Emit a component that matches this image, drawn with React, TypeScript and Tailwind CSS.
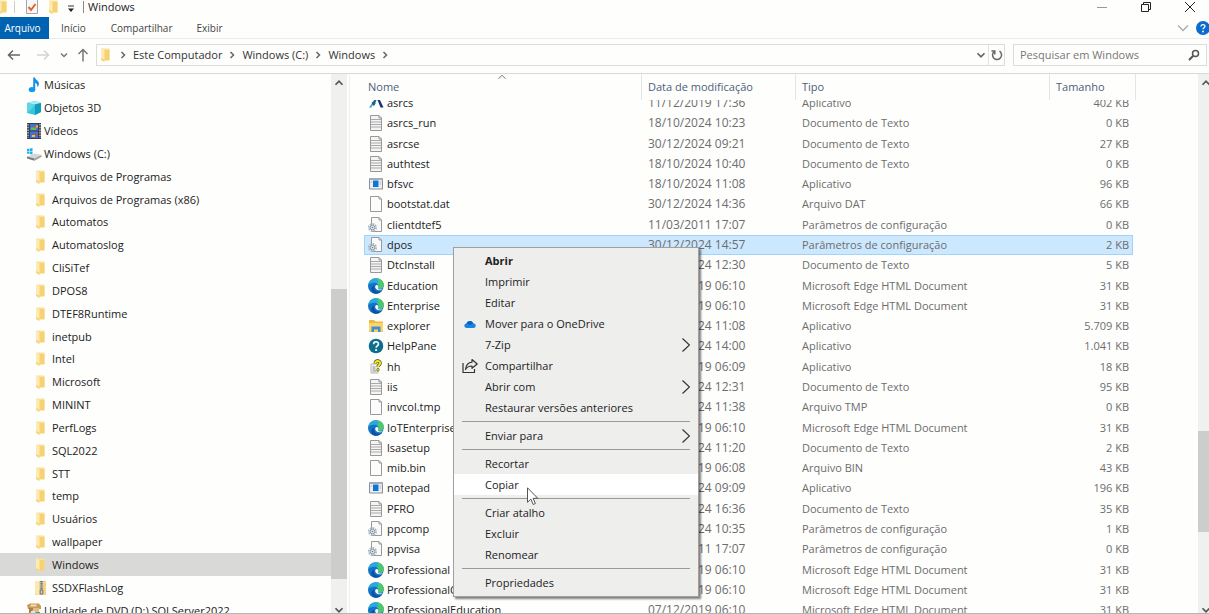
import type { ReactNode } from "react";
import clsx from "clsx";

type IconName =
  | "folder" | "music" | "cube" | "video" | "drive" | "zip" | "dvd"
  | "asrcs" | "text" | "app" | "blank" | "config" | "edge" | "explorer" | "help" | "chm";

const icons: Record<IconName, ReactNode> = {
  folder: (
    <>
      <path d="M4 1.5h8.5v11.5H4z" fill="#fbe29a" />
      <path d="M7 3h5.500v10.500H7z" fill="#f6d273" />
      <path d="M4 1.500 7.500 3.500V15L4 13z" fill="#fdeab4" />
      <path d="M4 13 7.500 15V12.500L4 11z" fill="#f7d57c" />
    </>
  ),
  music: (
    <>
      <path d="M7.200.5H9c.3 2.300 4 3 4 6.200 0 1.500-.8 2.700-1.800 3.300.5-2.300-.5-3.500-2-4.200V12.500H7.200z" fill="#1b8fe6" />
      <ellipse cx="6" cy="12.500" rx="3.300" ry="2.600" fill="#0f9bf2" />
    </>
  ),
  cube: (
    <>
      <path d="M1 3 9 1l6 2v9l-6 3-8-2z" fill="#37c5de" />
      <path d="M1 3l8 1.500L15 3 9 1z" fill="#a4ebf3" />
      <path d="M9 4.500 15 3v9l-6 3z" fill="#0f9cbd" />
      <path d="M1 3l8 1.500-4 5L1 13z" fill="#5fd6e8" />
    </>
  ),
  video: (
    <>
      <path d="M1 0h14v16H1z" fill="#3b3f4c" />
      <path d="M4 1h8v6.500H4zM4 8.500h8V15H4z" fill="#3f73d8" />
      <path d="M2 1v14M14 1v14" stroke="#d9dce2" strokeWidth="1.200" strokeDasharray="1.500 1.200" />
      <path d="M8 3h2v2H8z" fill="#e6463c" />
      <path d="M5 4.500h5V7H5z" fill="#69b946" />
      <path d="M10 2.500h2v2h-2zM6 12h3v2H6z" fill="#f1c232" />
      <path d="M9 10h2v3H9z" fill="#d8443c" />
    </>
  ),
  drive: (
    <>
      <path d="M1 3l2.500-.4V5H1zM4 2.500l2.500-.4V5H4zM1 5.500h2.500V8L1 7.600zM4 5.500h2.500v3L4 8.100z" fill="#1fb0e8" />
      <path d="M1 10.500 9 7.500l6.500 1.500-7 3.500z" fill="#d4d6d8" />
      <path d="M1 10.500l7.500 2v2.300L1 12.500z" fill="#77797c" />
      <path d="M8.500 12.500l7-3.500v1.800l-7 4z" fill="#9b9da0" />
    </>
  ),
  zip: (
    <>
      <path d="M3 1h11v14H3z" fill="#f7d678" />
      <path d="M3 1h4v14l-4-1z" fill="#fce9b0" />
      <path d="M7.500 1h4v14h-4z" fill="#d6cfb9" />
      <path d="M9.500 1v9" stroke="#5c5b57" strokeWidth="2.200" strokeDasharray="1.200 1" />
      <path d="M8.200 10h2.600v4H8.200z" fill="none" stroke="#77736a" />
    </>
  ),
  dvd: (
    <>
      <path d="M1 2l3-1.500h9L15 3v3H2z" fill="#c9995a" />
      <path d="M3 5h10v11H3z" fill="#e2bb7f" />
      <path d="M3 5h4v11H3z" fill="#ab7c43" />
      <path d="M5 1.500h6l-1 2H4z" fill="#f3ddb2" />
      <path d="M9 9h5v6H9z" fill="#4aa564" />
      <circle cx="7" cy="10" r="2.500" fill="#dfe4e8" />
    </>
  ),
  asrcs: (
    <>
      <path d="M1 12.500 4.500 8H8L6 10.500H4L3.500 12.500z" fill="#2ba0b8" />
      <path d="M3.500 8 6.500 5H8.500L6 11z" fill="#1c5f90" />
      <path d="M9.500 5h2.500L15.500 12.500h-3z" fill="#17356e" />
    </>
  ),
  text: (
    <>
      <path d="M2.500.5h8.500l2.500 2.500v12.500h-11z" fill="#f4f4f4" stroke="#999" />
      <path d="M3 4.500h10M3 7h10M3 9.500h10M3 12h10" stroke="#aaa" strokeWidth="1.200" />
      <path d="M11 .5V3h2.500" fill="none" stroke="#999" />
    </>
  ),
  app: (
    <>
      <path d="M1.500 2.500h13v10.500h-13z" fill="#eceff2" stroke="#8a8f94" />
      <path d="M1 2h14v2H1z" fill="#a7acb2" />
      <path d="M5 4.500h5.500v6.500H5z" fill="#0a78d7" />
      <path d="M11.500 6h2M11.500 8h2M2.500 6h1.500" stroke="#b3b8bc" />
    </>
  ),
  blank: (
    <>
      <path d="M2.500.5h8.500l2.500 2.500v12.500h-11z" fill="#fcfcfc" stroke="#999" />
      <path d="M11 .5V3h2.500" fill="none" stroke="#999" />
    </>
  ),
  config: (
    <>
      <path d="M3.500.5h7.500l2.500 2.500v11.500h-10z" fill="#fafafa" stroke="#999" />
      <path d="M11 .5V3h2.500" fill="none" stroke="#999" />
      <circle cx="4.500" cy="10.500" r="3.400" fill="none" stroke="#a9b7c1" strokeWidth="2.200" strokeDasharray="1.700 .9" />
      <circle cx="4.500" cy="10.500" r="2.300" fill="#dfe6ea" stroke="#8fa1ad" />
      <circle cx="4.500" cy="10.500" r=".8" fill="#6f828e" />
    </>
  ),
  edge: (
    <>
      <circle cx="7.800" cy="8" r="7.800" fill="#1273c8" />
      <path d="M.3 7C1 3 4 .2 8 .2c4.500 0 7.800 3 7.800 6.700 0 2.600-1.900 4-4.200 4-1.500 0-2.100-.7-1.400-1.600C11 7.500 9.500 4.800 6.500 4.800 3.500 4.800 1.300 5.800.3 7z" fill="#2aa9dc" />
      <path d="M8.500.3c4.300.3 7.300 3.200 7.300 6.600 0 2.600-1.900 4-4.200 4-1.500 0-2.100-.7-1.400-1.600.8-1.300.5-3-1-4C11 5 10.500 2 8.500.3z" fill="#4fc76a" />
      <path d="M6.200 7.800c-1 3.500 1.600 6.300 4.800 5.900 1.400-.2 2.600-.9 3.500-1.900-1.300 2.500-3.700 4-6.500 4-3 0-5-2.800-4.500-5.100.3-1.300 1.200-2.400 2.700-2.900z" fill="#0e4f9f" />
      <path d="M10.200 9.300c.4-1.200-.3-2.200-1.400-2.200S7 8.200 7.200 9.300c.4 1.800 2.200 2.900 4.400 2.900 1.500 0 2.700-.5 3.400-1.300-1 .5-2 .7-3.400.6-1.600-.1-2.300-1-1.400-2.200z" fill="#fff" />
    </>
  ),
  explorer: (
    <>
      <path d="M1 2h5l1.500 1.500H15V14H1z" fill="#f0b93a" />
      <path d="M1 5h14v8.500H1z" fill="#fcd668" />
      <path d="M3.500 14V8.500h9V14H10v-2.500H6V14z" fill="#3f8fd4" />
    </>
  ),
  help: (
    <>
      <circle cx="8" cy="8" r="7.300" fill="#0c6d8c" />
      <path d="M5.600 6.200C5.600 3 10.500 3 10.500 6c0 1.800-2.400 1.900-2.400 3.700" fill="none" stroke="#fff" strokeWidth="1.700" />
      <circle cx="8.100" cy="12" r="1.100" fill="#fff" />
    </>
  ),
  chm: (
    <>
      <path d="M3 5h7v9H3z" fill="#f3f3f0" stroke="#b5b5b0" />
      <path d="M4.500 8h3M4.500 10h3M4.500 12h4" stroke="#8a8a86" />
      <path d="M7.200 4.500C7.200 1.200 12.200 1.200 12.200 4c0 2-2.200 2-2.200 4" fill="none" stroke="#45451a" strokeWidth="3.200" />
      <path d="M7.200 4.500C7.200 1.200 12.200 1.200 12.200 4c0 2-2.200 2-2.200 4" fill="none" stroke="#f3e51e" strokeWidth="2" />
      <circle cx="10" cy="10.700" r="1.300" fill="#f3e51e" stroke="#45451a" strokeWidth=".6" />
    </>
  ),
};

function Icon({ name, className = "size-4" }: { name: IconName; className?: string }) {
  return (
    <svg viewBox="0 0 16 16" className={clsx("shrink-0", className)} aria-hidden="true">
      {icons[name]}
    </svg>
  );
}

const chevrons = {
  up: "M4 10l4-4 4 4",
  down: "M4 6l4 4 4-4",
  right: "M6 4l4 4-4 4",
};

function Chevron({ dir, className = "size-3", width = 2 }: { dir: keyof typeof chevrons; className?: string; width?: number }) {
  return (
    <svg viewBox="0 0 16 16" className={clsx("shrink-0", className)} fill="none" stroke="currentColor" strokeWidth={width} aria-hidden="true">
      <path d={chevrons[dir]} />
    </svg>
  );
}

const tree: { name: string; icon: IconName; nested?: boolean }[] = [
  { name: "Músicas", icon: "music" },
  { name: "Objetos 3D", icon: "cube" },
  { name: "Vídeos", icon: "video" },
  { name: "Windows (C:)", icon: "drive" },
  { name: "Arquivos de Programas", icon: "folder", nested: true },
  { name: "Arquivos de Programas (x86)", icon: "folder", nested: true },
  { name: "Automatos", icon: "folder", nested: true },
  { name: "Automatoslog", icon: "folder", nested: true },
  { name: "CliSiTef", icon: "folder", nested: true },
  { name: "DPOS8", icon: "folder", nested: true },
  { name: "DTEF8Runtime", icon: "folder", nested: true },
  { name: "inetpub", icon: "folder", nested: true },
  { name: "Intel", icon: "folder", nested: true },
  { name: "Microsoft", icon: "folder", nested: true },
  { name: "MININT", icon: "folder", nested: true },
  { name: "PerfLogs", icon: "folder", nested: true },
  { name: "SQL2022", icon: "folder", nested: true },
  { name: "STT", icon: "folder", nested: true },
  { name: "temp", icon: "folder", nested: true },
  { name: "Usuários", icon: "folder", nested: true },
  { name: "wallpaper", icon: "folder", nested: true },
  { name: "Windows", icon: "folder", nested: true },
  { name: "SSDXFlashLog", icon: "zip", nested: true },
  { name: "Unidade de DVD (D:) SQLServer2022", icon: "dvd" },
];

const TXT = "Documento de Texto";
const APP = "Aplicativo";
const INI = "Parâmetros de configuração";
const HTML = "Microsoft Edge HTML Document";

const files: [IconName, string, string, string, string][] = [
  ["asrcs", "asrcs", "11/12/2019 17:36", APP, "402 KB"],
  ["text", "asrcs_run", "18/10/2024 10:23", TXT, "0 KB"],
  ["text", "asrcse", "30/12/2024 09:21", TXT, "27 KB"],
  ["text", "authtest", "18/10/2024 10:40", TXT, "0 KB"],
  ["app", "bfsvc", "18/10/2024 11:08", APP, "96 KB"],
  ["blank", "bootstat.dat", "30/12/2024 14:36", "Arquivo DAT", "66 KB"],
  ["config", "clientdtef5", "11/03/2011 17:07", INI, "0 KB"],
  ["config", "dpos", "30/12/2024 14:57", INI, "2 KB"],
  ["text", "DtcInstall", "18/10/2024 12:30", TXT, "5 KB"],
  ["edge", "Education", "07/12/2019 06:10", HTML, "31 KB"],
  ["edge", "Enterprise", "07/12/2019 06:10", HTML, "31 KB"],
  ["explorer", "explorer", "18/10/2024 11:08", APP, "5.709 KB"],
  ["help", "HelpPane", "18/10/2024 14:00", APP, "1.041 KB"],
  ["chm", "hh", "07/12/2019 06:09", APP, "18 KB"],
  ["text", "iis", "18/10/2024 12:31", TXT, "95 KB"],
  ["blank", "invcol.tmp", "18/10/2024 11:38", "Arquivo TMP", "0 KB"],
  ["edge", "IoTEnterprise", "07/12/2019 06:10", HTML, "31 KB"],
  ["text", "lsasetup", "18/10/2024 11:20", TXT, "2 KB"],
  ["blank", "mib.bin", "07/12/2019 06:08", "Arquivo BIN", "43 KB"],
  ["app", "notepad", "18/10/2024 09:09", APP, "196 KB"],
  ["text", "PFRO", "30/12/2024 16:36", TXT, "35 KB"],
  ["config", "ppcomp", "18/10/2024 10:35", INI, "1 KB"],
  ["config", "ppvisa", "11/03/2011 17:07", INI, "0 KB"],
  ["edge", "Professional", "07/12/2019 06:10", HTML, "31 KB"],
  ["edge", "ProfessionalCountrySpecific", "07/12/2019 06:10", HTML, "31 KB"],
  ["edge", "ProfessionalEducation", "07/12/2019 06:10", HTML, "31 KB"],
];

type MenuItem = { label: string; icon?: ReactNode; submenu?: boolean };

const menu: MenuItem[][] = [
  [
    { label: "Abrir" },
    { label: "Imprimir" },
    { label: "Editar" },
    {
      label: "Mover para o OneDrive",
      icon: (
        <svg viewBox="0 0 16 16" className="size-3.5">
          <path d="M4.500 12.500C.5 12.500.8 8 4 7.500 5 3.500 10.500 3.500 11.500 7c4 .2 4 5.500.5 5.500z" fill="#1486de" />
          <path d="M4 7.500C5 3.500 10.500 3.500 11.500 7L8 9.500z" fill="#0b63ba" />
        </svg>
      ),
    },
    { label: "7-Zip", submenu: true },
    {
      label: "Compartilhar",
      icon: (
        <svg viewBox="0 0 16 16" className="size-4" fill="none" stroke="#333" strokeWidth="1.200" strokeLinejoin="round">
          <path d="M1 5v9.500h11.500V11" />
          <path d="M10 1.500 15.200 6 10 10.300V8C7 8 5 9 3.500 11.500 4 7.500 6.200 4.500 10 4.200z" />
        </svg>
      ),
    },
    { label: "Abrir com", submenu: true },
    { label: "Restaurar versões anteriores" },
  ],
  [{ label: "Enviar para", submenu: true }],
  [{ label: "Recortar" }, { label: "Copiar" }],
  [{ label: "Criar atalho" }, { label: "Excluir" }, { label: "Renomear" }],
  [{ label: "Propriedades" }],
];

function TitleBar() {
  return (
    <header className="flex h-[17px] items-start justify-between overflow-hidden">
      <div className="flex h-[14px] items-center">
        <Icon name="folder" className="-ml-1.5 size-4" />
        <span className="ml-1 h-3 w-px bg-[#ccc]" />
        <button aria-label="Propriedades" className="ml-2.5">
          <svg viewBox="0 0 14 16" className="h-4 w-3.5" fill="none">
            <path d="M1.500.5h11v14h-11z" fill="#f7f7f7" stroke="#a6a6a6" />
            <path d="M3.500 8l2.500 3 4.500-6" stroke="#e2622a" strokeWidth="2" />
          </svg>
        </button>
        <button aria-label="Nova pasta" className="ml-1.5">
          <Icon name="folder" />
        </button>
        <button aria-label="Personalizar" className="ml-1.5">
          <svg viewBox="0 0 8 8" className="mt-1 size-2">
            <path d="M1 1h6" stroke="#333" />
            <path d="M1 3.500h6L4 7z" fill="#222" />
          </svg>
        </button>
        <span className="ml-2 h-3 w-px bg-[#888]" />
        <h1 className="ml-1 text-[11px] leading-[14px] text-[#222]">Windows</h1>
      </div>
      <div className="flex h-[13px] items-center gap-[34px] pr-3.5 text-[#222]">
        <button aria-label="Minimizar">
          <svg viewBox="0 0 10 10" className="size-2.5" stroke="#999"><path d="M0 5.500h10" /></svg>
        </button>
        <button aria-label="Restaurar">
          <svg viewBox="0 0 10 10" className="size-2.5" fill="none" stroke="currentColor">
            <path d="M.5 2.500h7v7h-7zM2.500 2.500v-2h7v7h-2" />
          </svg>
        </button>
        <button aria-label="Fechar">
          <svg viewBox="0 0 10 10" className="size-2.5" stroke="currentColor"><path d="M0 0l10 10M10 0L0 10" /></svg>
        </button>
      </div>
    </header>
  );
}

function Ribbon() {
  return (
    <nav className="flex h-[22px] items-center border-b border-[#ececec] text-[10px] text-[#444]">
      <button className="h-[22px] w-[49px] bg-[#0063b1] pr-1 text-white">Arquivo</button>
      <button className="ml-3">Início</button>
      <button className="ml-[25px]">Compartilhar</button>
      <button className="ml-6">Exibir</button>
      <button aria-label="Expandir" className="ml-auto text-[#aaa]">
        <Chevron dir="down" className="size-5" width={1} />
      </button>
      <button aria-label="Ajuda" className="-mr-0.5 ml-0.5">
        <svg viewBox="0 0 16 16" className="size-4">
          <circle cx="8" cy="8" r="7" fill="#0a6cce" />
          <path d="M6 6.500C6 4 10 4 10 6.300c0 1.400-2 1.500-2 3" fill="none" stroke="#fff" strokeWidth="1.300" />
          <circle cx="8" cy="11.500" r=".9" fill="#fff" />
        </svg>
      </button>
    </nav>
  );
}

function AddressBar() {
  return (
    <div className="flex h-[35px] items-center border-b border-[#d9d9d9] pb-0.5 text-[#333]">
      <div className="flex w-24 items-center pl-[7px] text-[#777]">
        <button aria-label="Voltar">
          <svg viewBox="0 0 14 14" className="size-3.5" fill="none" stroke="#666" strokeWidth="1.500"><path d="M13 7H1.500M6 2.500 1.500 7 6 11.500" /></svg>
        </button>
        <button aria-label="Avançar" className="ml-[15px]">
          <svg viewBox="0 0 14 14" className="size-3.5" fill="none" stroke="#d4d4d4" strokeWidth="1.500"><path d="M1 7h11.500M8 2.500 12.500 7 8 11.500" /></svg>
        </button>
        <button aria-label="Recentes" className="ml-2">
          <Chevron dir="down" />
        </button>
        <button aria-label="Acima" className="ml-1.5">
          <svg viewBox="0 0 14 14" className="size-3.5" fill="none" stroke="#777" strokeWidth="1.500"><path d="M7 13.500V1.500M2.500 6 7 1.500 11.500 6" /></svg>
        </button>
      </div>
      <div className="flex h-[22px] flex-1 items-center border border-[#dcdcdc]">
        <Icon name="folder" />
        <div className="flex items-center gap-1 pl-1 text-[#333]">
          {["Este Computador", "Windows (C:)", "Windows"].map((part) => (
            <span key={part} className="flex items-center gap-1">
              <Chevron dir="right" className="size-3 text-[#666]" />
              <a href="#">{part}</a>
            </span>
          ))}
          <Chevron dir="right" className="size-3 text-[#666]" />
        </div>
        <button aria-label="Locais anteriores" className="ml-auto text-[#666]">
          <Chevron dir="down" className="size-3.5" />
        </button>
        <button aria-label="Atualizar" className="flex h-full w-4 items-center justify-center border-l border-[#e4e4e4]">
          <svg viewBox="0 0 12 12" className="size-3" fill="none" stroke="#666" strokeWidth="1.500">
            <path d="M8.500 2.200A4.500 4.500 0 1 1 3.200 2.500" />
            <path d="M3.800 5.500V2H.5" />
          </svg>
        </button>
      </div>
      <label className="mr-[2px] ml-2 flex h-[22px] w-[194px] items-center border border-[#dcdcdc] px-1.5">
        <input type="search" aria-label="Pesquisar" placeholder="Pesquisar em Windows" className="min-w-0 flex-1 bg-transparent outline-none placeholder:text-[#777]" />
        <svg viewBox="0 0 12 12" className="size-3" fill="none" stroke="#555" strokeWidth="1.500">
          <circle cx="7.500" cy="4.500" r="3" />
          <path d="M5.300 6.700 1 11" strokeWidth="2" />
        </svg>
      </label>
    </div>
  );
}

function ScrollBar({ className, thumb }: { className: string; thumb: string }) {
  return (
    <div className={clsx("flex shrink-0 flex-col overflow-hidden bg-[#f0f0ef] text-[#555]", className)}>
      <Chevron dir="up" className="my-0.5 ml-px size-3.5" />
      <div className={clsx("w-full bg-[#cdcdcb]", thumb)} />
      <Chevron dir="down" className="mt-auto -mb-1 ml-px size-3.5" />
    </div>
  );
}

function FolderTree() {
  return (
    <nav className="min-w-0 flex-1 overflow-hidden">
      <ul>
        {tree.map(({ name, icon, nested }, i) => (
          <li key={i} className="h-[23px] nth-[6n+1]:h-[22px]">
            <a
              href="#"
              className={clsx(
                "flex h-full items-center whitespace-nowrap",
                nested ? "gap-1 pl-8" : "gap-0.5 pl-[26px]",
                nested && name === "Windows" && "bg-[#d9d9d8]",
              )}
            >
              <Icon name={icon} />
              {name}
            </a>
          </li>
        ))}
      </ul>
    </nav>
  );
}

const columns = "grid grid-cols-[278px_154px_254px_86px]";

function FileList() {
  return (
    <table className="block w-[772px]">
      <thead className="relative z-10 block bg-[#fefefd] text-[#4c607a]">
        <tr className={clsx(columns, "h-[26px]")}>
          {["Nome", "Data de modificação", "Tipo", "Tamanho"].map((title) => (
            <th key={title} scope="col" className="relative flex items-center border-r border-[#e5e5e5] pl-1.5 font-normal first:pl-1">
              {title}
              {title === "Nome" && <Chevron dir="up" width={1} className="absolute -top-1 left-[131px] size-3.5" />}
            </th>
          ))}
        </tr>
      </thead>
      <tbody className="-mt-[7px] block">
        {files.map(([icon, name, date, type, size]) => (
          <tr
            key={name}
            className={clsx(
              columns,
              "mr-[3px] h-5 items-center whitespace-nowrap text-[#6d6d6d] nth-[7n+3]:h-[21px] nth-[7n]:h-[21px]",
              name === "dpos" && "bg-[#cce8ff] outline -outline-offset-1 outline-[#a5d3f7]",
            )}
          >
            <td className="flex items-center gap-[3px] pl-1 text-[#222]">
              <Icon name={icon} />
              {name}
            </td>
            <td className="pl-1.5 text-xs">{date}</td>
            <td className="pl-1.5">{type}</td>
            <td className="pr-[7px] text-right">{size}</td>
          </tr>
        ))}
      </tbody>
    </table>
  );
}

function ContextMenu() {
  return (
    <div role="menu" className="absolute top-[247px] left-[453px] z-20 w-[246px] border border-[#a0a0a0] bg-[#eeeeed] pt-[2px] pb-[3px] text-[#222] shadow-[2px_2px_2px_rgba(0,0,0,0.5)]">
      {menu.map((group, i) => (
        <div key={i} role="group">
          {i > 0 && <hr className="mx-2 my-[3px] border-t border-[#9a9a9a]" />}
          {group.map(({ label, icon, submenu }) => (
            <button
              key={label}
              role="menuitem"
              className={clsx(
                "flex h-[21px] w-full items-center pr-1.5 text-left",
                label === "Abrir" && "font-bold",
                label === "Copiar" && "bg-white",
              )}
            >
              <span className="flex w-[31px] justify-center">{icon}</span>
              {label}
              {submenu && (
                <svg viewBox="0 0 8 14" className="mr-0.5 ml-auto h-3.5 w-2" fill="none" stroke="#333" strokeWidth="1.200" aria-hidden="true">
                  <path d="M.5.5 7.500 7l-7 6.500" />
                </svg>
              )}
            </button>
          ))}
        </div>
      ))}
    </div>
  );
}

export default function App() {
  return (
    <div className="relative flex h-screen flex-col overflow-hidden bg-[#fefefd] font-['Open_Sans',sans-serif] text-[11px] leading-4 text-[#222]">
      <TitleBar />
      <Ribbon />
      <AddressBar />
      <main className="flex min-h-0 flex-1 border-b border-[#b5b5b5]">
        <div className="flex w-[347px] shrink-0">
          <FolderTree />
          <ScrollBar className="w-4" thumb="mt-[197px] h-[290px]" />
        </div>
        <section className="ml-[2px] min-w-0 flex-1 overflow-hidden border-l border-[#f0f0f0] pl-3.5">
          <FileList />
        </section>
        <ScrollBar className="w-[11px]" thumb="mt-[339px] h-[101px]" />
      </main>
      <ContextMenu />
      <svg viewBox="0 0 12 19" className="absolute top-[487px] left-[527px] z-30 h-[19px] w-3" aria-hidden="true">
        <path d="M.5.800v14.500l3.400-3.200 2.300 5.400 2.200-1-2.300-5.200h4.700z" fill="#fff" stroke="#555" />
      </svg>
    </div>
  );
}
